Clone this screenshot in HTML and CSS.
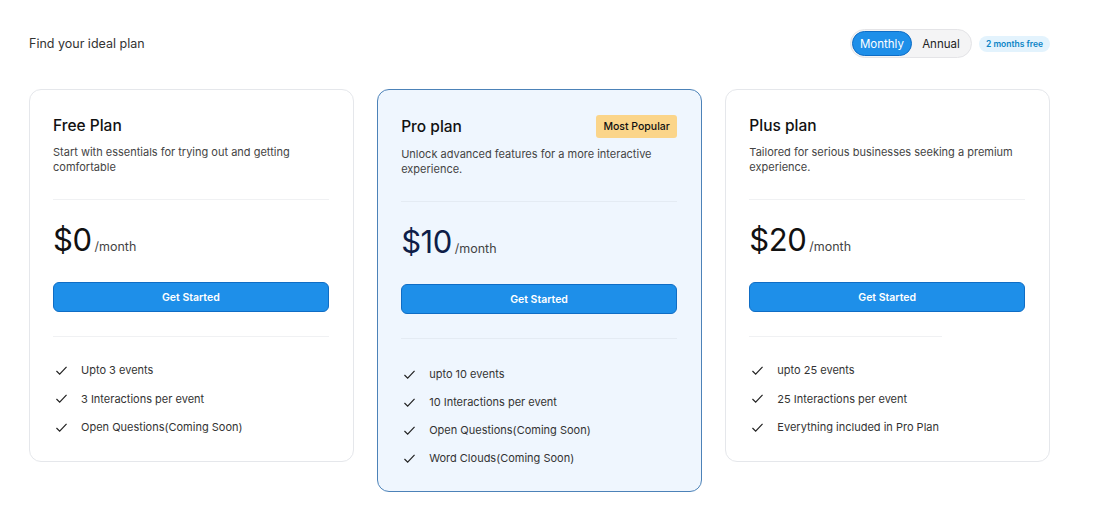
FILE: index.html
```html
<!DOCTYPE html>
<html lang="en">
<head>
    <meta charset="UTF-8">
    <meta name="viewport" content="width=device-width, initial-scale=1.0">
    <title>Pricing</title>
    <link rel="stylesheet" href="styles.css">
</head>
<body>
    <div class="container">
        <div class="header">
            <h1 class="page-title">Find your ideal plan</h1>
            <div class="billing">
                <div class="toggle">
                    <button class="toggle-btn active">Monthly</button>
                    <button class="toggle-btn">Annual</button>
                </div>
                <span class="save-badge">2 months free</span>
            </div>
        </div>

        <div class="plans">
            <div class="card">
                <div class="card-head">
                    <h2 class="plan-name">Free Plan</h2>
                </div>
                <p class="plan-desc">Start with essentials for trying out and getting comfortable</p>
                <hr class="divider">
                <div class="price"><span class="amount">$0</span><span class="period">/month</span></div>
                <button class="cta">Get Started</button>
                <hr class="divider">
                <ul class="features">
                    <li><svg class="check" viewBox="0 0 14 12"><path d="M1.5 6.5l3.5 3.5L12.5 2"/></svg>Upto 3 events</li>
                    <li><svg class="check" viewBox="0 0 14 12"><path d="M1.5 6.5l3.5 3.5L12.5 2"/></svg>3 Interactions per event</li>
                    <li><svg class="check" viewBox="0 0 14 12"><path d="M1.5 6.5l3.5 3.5L12.5 2"/></svg>Open Questions(Coming Soon)</li>
                </ul>
            </div>

            <div class="card card-featured">
                <div class="card-head">
                    <h2 class="plan-name">Pro plan</h2>
                    <span class="popular">Most Popular</span>
                </div>
                <p class="plan-desc">Unlock advanced features for a more interactive experience.</p>
                <hr class="divider">
                <div class="price"><span class="amount">$10</span><span class="period">/month</span></div>
                <button class="cta">Get Started</button>
                <hr class="divider">
                <ul class="features">
                    <li><svg class="check" viewBox="0 0 14 12"><path d="M1.5 6.5l3.5 3.5L12.5 2"/></svg>upto 10 events</li>
                    <li><svg class="check" viewBox="0 0 14 12"><path d="M1.5 6.5l3.5 3.5L12.5 2"/></svg>10 Interactions per event</li>
                    <li><svg class="check" viewBox="0 0 14 12"><path d="M1.5 6.5l3.5 3.5L12.5 2"/></svg>Open Questions(Coming Soon)</li>
                    <li><svg class="check" viewBox="0 0 14 12"><path d="M1.5 6.5l3.5 3.5L12.5 2"/></svg>Word Clouds(Coming Soon)</li>
                </ul>
            </div>

            <div class="card">
                <div class="card-head">
                    <h2 class="plan-name">Plus plan</h2>
                </div>
                <p class="plan-desc">Tailored for serious businesses seeking a premium experience.</p>
                <hr class="divider">
                <div class="price"><span class="amount">$20</span><span class="period">/month</span></div>
                <button class="cta">Get Started</button>
                <hr class="divider divider-short">
                <ul class="features">
                    <li><svg class="check" viewBox="0 0 14 12"><path d="M1.5 6.5l3.5 3.5L12.5 2"/></svg>upto 25 events</li>
                    <li><svg class="check" viewBox="0 0 14 12"><path d="M1.5 6.5l3.5 3.5L12.5 2"/></svg>25 Interactions per event</li>
                    <li><svg class="check" viewBox="0 0 14 12"><path d="M1.5 6.5l3.5 3.5L12.5 2"/></svg>Everything included in Pro Plan</li>
                </ul>
            </div>
        </div>
    </div>
</body>
</html>
```

FILE: styles.css
```css
body {
    font-family: Inter, "Noto Sans", sans-serif;
    margin: 0;
    padding: 0;
    background-color: #fff;
    color: #222;
}

.container {
    width: 1021px;
    padding: 29px 0 0 29px;
}

.header {
    display: flex;
    align-items: center;
    justify-content: space-between;
    height: 29px;
    margin-bottom: 31px;
}

.page-title {
    margin: 0;
    font-size: 12.5px;
    font-weight: 400;
    color: #333;
}

.billing {
    display: flex;
    align-items: center;
    gap: 7px;
}

.toggle {
    display: flex;
    align-items: center;
    height: 27px;
    padding: 0 1px;
    background-color: #f4f4f5;
    border: 1px solid #e4e4e7;
    border-radius: 15px;
}

.toggle-btn {
    font-family: inherit;
    font-size: 11.5px;
    width: 58px;
    height: 25px;
    padding: 0;
    border: 1px solid transparent;
    border-radius: 13px;
    background: none;
    color: #222;
    cursor: pointer;
}

.toggle-btn.active {
    width: 60px;
    background-color: #1e8fe9;
    border-color: #0f6dc5;
    color: #fff;
}

.save-badge {
    display: inline-block;
    padding: 3px 7px;
    border-radius: 9px;
    background-color: #e3f3fd;
    color: #0a84c6;
    font-size: 8.5px;
    font-weight: 600;
}

.plans {
    display: flex;
    align-items: flex-start;
    gap: 23.5px;
}

.card {
    box-sizing: border-box;
    width: 325px;
    padding: 23px 24px 24px 23px;
    border: 1px solid #e5e7eb;
    border-radius: 12px;
    background-color: #fff;
}

.card-featured {
    background-color: #eff6fe;
    border-color: #4c82b8;
    padding-bottom: 23px;
}

.card-head {
    display: flex;
    align-items: center;
    justify-content: space-between;
    min-height: 24px;
}

.card-featured .card-head {
    min-height: 26px;
}

.plan-name {
    margin: 0;
    font-size: 15.5px;
    font-weight: 500;
    color: #111;
}

.popular {
    padding: 5px 7px;
    border-radius: 3px;
    background-color: #fbd58a;
    font-size: 10.5px;
    font-weight: 500;
    color: #111;
}

.plan-desc {
    margin: 8px 0 0;
    font-size: 11px;
    line-height: 15px;
    color: #444;
}

.divider {
    border: 0;
    border-top: 1px solid #f0f1f3;
    margin: 24px 0 0;
}

.card-featured .divider {
    border-top-color: #e4ebf3;
}

.divider-short {
    width: 70%;
    margin-left: 0;
}

.price {
    display: flex;
    align-items: baseline;
    margin-top: 21px;
    height: 41px;
}

.amount {
    font-size: 31px;
    font-weight: 400;
    color: #111;
    letter-spacing: -0.5px;
}

.card-featured .amount {
    color: #0e1d48;
}

.period {
    margin-left: 3px;
    font-size: 12.5px;
    color: #444;
}

.cta {
    display: block;
    width: 100%;
    height: 30px;
    margin-top: 20px;
    font-family: inherit;
    font-size: 10.5px;
    font-weight: 600;
    border: 1px solid #0f6dc5;
    border-radius: 6px;
    background-color: #1e8fe9;
    color: #fff;
    cursor: pointer;
}

.features {
    list-style: none;
    margin: 23px 0 0;
    padding: 0;
}

.card-featured .features {
    margin-top: 25px;
}

.features li {
    display: flex;
    align-items: center;
    height: 20px;
    margin-bottom: 8.5px;
    font-size: 11px;
    color: #333;
}

.card-featured .features li {
    margin-bottom: 8px;
}

.features li:last-child {
    margin-bottom: 0;
}

.check {
    width: 13px;
    height: 11px;
    margin: 0 13px 0 2px;
    fill: none;
    stroke: #222;
    stroke-width: 1.3;
}
```
